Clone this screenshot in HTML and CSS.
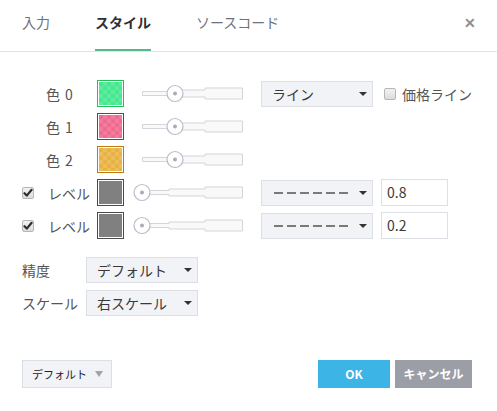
FILE: index.html
```html
<!DOCTYPE html>
<html lang="ja">
<head>
<meta charset="utf-8">
<link rel="stylesheet" href="styles.css">
</head>
<body>
<div class="dialog">
  <div class="header">
    <div class="tab">入力</div>
    <div class="tab active">スタイル</div>
    <div class="tab">ソースコード</div>
    <div class="close">✕</div>
  </div>

  <div class="content">
    <div class="row">
      <div class="cb-cell"></div>
      <div class="label">色<span class="num">0</span></div>
      <div class="swatch green"></div>
      <div class="slider"><svg width="101" height="17" viewBox="0 0 101 17"><path class="track" d="M0.5 6.5H27V5H63V3H100.5V14H63V12H27V10.5H0.5Z"/><circle class="knob" cx="33" cy="8.5" r="8"/><circle class="dot" cx="33" cy="8.5" r="2"/></svg></div>
      <div class="select wide"><span>ライン</span><i class="caret"></i></div>
      <label class="chk-label"><span class="checkbox"></span>価格ライン</label>
    </div>
    <div class="row">
      <div class="cb-cell"></div>
      <div class="label">色<span class="num">1</span></div>
      <div class="swatch pink"></div>
      <div class="slider"><svg width="101" height="17" viewBox="0 0 101 17"><path class="track" d="M0.5 6.5H27V5H63V3H100.5V14H63V12H27V10.5H0.5Z"/><circle class="knob" cx="33" cy="8.5" r="8"/><circle class="dot" cx="33" cy="8.5" r="2"/></svg></div>
    </div>
    <div class="row">
      <div class="cb-cell"></div>
      <div class="label">色<span class="num">2</span></div>
      <div class="swatch orange"></div>
      <div class="slider"><svg width="101" height="17" viewBox="0 0 101 17"><path class="track" d="M0.5 6.5H27V5H63V3H100.5V14H63V12H27V10.5H0.5Z"/><circle class="knob" cx="33" cy="8.5" r="8"/><circle class="dot" cx="33" cy="8.5" r="2"/></svg></div>
    </div>
    <div class="row">
      <div class="cb-cell"><span class="checkbox checked"><svg width="10" height="10" viewBox="0 0 10 10"><path d="M1.5 5.2L3.8 7.6L8.6 1.8" /></svg></span></div>
      <div class="label lv">レベル</div>
      <div class="swatch gray"></div>
      <div class="slider"><svg width="101" height="17" viewBox="0 0 101 17"><path class="track" d="M0.5 6.5H27V5H63V3H100.5V14H63V12H27V10.5H0.5Z"/><circle class="knob" cx="0" cy="8.5" r="8"/><circle class="dot" cx="0" cy="8.5" r="2"/></svg></div>
      <div class="select wide dash"><svg class="dashes" width="74" height="4" viewBox="0 0 74 4"><line x1="0" y1="2" x2="74" y2="2"/></svg><i class="caret"></i></div>
      <div class="input">0.8</div>
    </div>
    <div class="row">
      <div class="cb-cell"><span class="checkbox checked"><svg width="10" height="10" viewBox="0 0 10 10"><path d="M1.5 5.2L3.8 7.6L8.6 1.8" /></svg></span></div>
      <div class="label lv">レベル</div>
      <div class="swatch gray"></div>
      <div class="slider"><svg width="101" height="17" viewBox="0 0 101 17"><path class="track" d="M0.5 6.5H27V5H63V3H100.5V14H63V12H27V10.5H0.5Z"/><circle class="knob" cx="0" cy="8.5" r="8"/><circle class="dot" cx="0" cy="8.5" r="2"/></svg></div>
      <div class="select wide dash"><svg class="dashes" width="74" height="4" viewBox="0 0 74 4"><line x1="0" y1="2" x2="74" y2="2"/></svg><i class="caret"></i></div>
      <div class="input">0.2</div>
    </div>

    <div class="opts">
      <div class="opt-row">
        <div class="opt-label">精度</div>
        <div class="select wide"><span>デフォルト</span><i class="caret"></i></div>
      </div>
      <div class="opt-row">
        <div class="opt-label">スケール</div>
        <div class="select wide"><span>右スケール</span><i class="caret"></i></div>
      </div>
    </div>
  </div>

  <div class="footer">
    <div class="btn-default"><span>デフォルト</span><i class="caret big"></i></div>
    <div class="spacer"></div>
    <div class="btn ok">OK</div>
    <div class="btn cancel">キャンセル</div>
  </div>
</div>
</body>
</html>
```
FILE: styles.css
```css
html, body {
  margin: 0;
  padding: 0;
  background: #fff;
}
body {
  font-family: "Noto Sans CJK JP", "Noto Sans", sans-serif;
  color: #4a4a4a;
  font-size: 14px;
}
.dialog {
  width: 497px;
  height: 411px;
  position: relative;
  box-sizing: border-box;
}
.header {
  height: 51px;
  border-bottom: 1px solid #e0e3e8;
  display: flex;
  align-items: flex-start;
  padding-left: 22px;
  gap: 45px;
  position: relative;
}
.tab {
  height: 51px;
  box-sizing: border-box;
  padding-top: 11px;
  line-height: 22px;
  font-size: 14px;
  color: #6f7277;
  border-bottom: 2px solid transparent;
}
.tab.active {
  color: #2f3033;
  font-weight: bold;
  border-bottom-color: #55b88a;
}
.close {
  position: absolute;
  right: 21px;
  top: 12px;
  font-size: 14px;
  color: #8c9096;
  font-weight: bold;
  line-height: 20px;
}
.content {
  padding-top: 28px;
}
.row {
  display: flex;
  align-items: center;
  height: 27px;
  margin-bottom: 6px;
  padding-left: 22px;
}
.cb-cell {
  width: 24px;
  height: 27px;
  display: flex;
  align-items: center;
}
.label {
  width: 51px;
  font-size: 14px;
  color: #555;
  line-height: 20px;
}
.label .num {
  margin-left: 5px;
}
.label.lv {
  padding-left: 2px;
  width: 49px;
}
.swatch {
  width: 27px;
  height: 27px;
  box-sizing: border-box;
  border: 1px solid;
  padding: 1px;
  background-clip: content-box;
  flex: none;
}
.swatch.green {
  border-color: #1fc252;
  background-color: #44e88f;
  background-image: conic-gradient(rgba(255,255,255,0.14) 25%, transparent 0 50%, rgba(255,255,255,0.14) 0 75%, transparent 0);
  background-size: 8px 8px;
  background-origin: content-box;
}
.swatch.pink {
  border-color: #c2164a;
  background-color: #ef6a8f;
  background-image: conic-gradient(rgba(255,255,255,0.12) 25%, transparent 0 50%, rgba(255,255,255,0.12) 0 75%, transparent 0);
  background-size: 8px 8px;
  background-origin: content-box;
}
.swatch.orange {
  border-color: #bd7b0c;
  background-color: #e9b243;
  background-image: conic-gradient(rgba(255,255,255,0.14) 25%, transparent 0 50%, rgba(255,255,255,0.14) 0 75%, transparent 0);
  background-size: 8px 8px;
  background-origin: content-box;
}
.swatch.gray {
  border-color: #4b4b4b;
  background-color: #808080;
}
.slider {
  width: 101px;
  height: 17px;
  margin-left: 18px;
  flex: none;
}
.slider svg {
  display: block;
  overflow: visible;
}
.track {
  fill: #f9f9fa;
  stroke: #d2d5da;
  stroke-width: 1;
}
.knob {
  fill: #fff;
  stroke: #b9bdc7;
  stroke-width: 1.2;
}
.dot {
  fill: #a8acb7;
}
.select {
  height: 26px;
  box-sizing: border-box;
  background: #f2f3f6;
  border: 1px solid #dcdfe5;
  display: flex;
  align-items: center;
  justify-content: space-between;
  padding: 0 5px 0 10px;
  font-size: 14px;
  color: #3a3a3a;
  flex: none;
}
.select span {
  line-height: 20px;
}
.select.wide {
  width: 112px;
}
.select.dash {
  padding: 0 5px 0 12px;
}
.row .select {
  margin-left: 18px;
}
.caret {
  width: 0;
  height: 0;
  border-left: 4px solid transparent;
  border-right: 4px solid transparent;
  border-top: 4px solid #333;
  flex: none;
}
.caret.big {
  border-left-width: 4px;
  border-right-width: 4px;
  border-top-width: 6px;
  border-top-color: #a0a3a9;
}
.dashes {
  display: block;
  flex: none;
}
.dashes line {
  stroke: #7a7a7a;
  stroke-width: 2;
  stroke-dasharray: 9 4;
}
.chk-label {
  margin-left: 11px;
  display: flex;
  align-items: center;
  gap: 6px;
  font-size: 14px;
  color: #555;
}
.checkbox {
  width: 12px;
  height: 12px;
  box-sizing: border-box;
  border: 1px solid #b4b6ba;
  border-radius: 2px;
  background: linear-gradient(#f2f2f2, #dcdcdc);
  display: flex;
  align-items: center;
  justify-content: center;
  flex: none;
}
.checkbox svg path {
  fill: none;
  stroke: #2e2e2e;
  stroke-width: 2.2;
  stroke-linecap: round;
  stroke-linejoin: round;
}
.input {
  margin-left: 8px;
  width: 67px;
  height: 27px;
  box-sizing: border-box;
  border: 1px solid #dcdfe5;
  background: #fff;
  padding-left: 5px;
  line-height: 25px;
  font-size: 14px;
  color: #3a3a3a;
  flex: none;
}
.opts {
  margin-top: 18px;
  padding-left: 22px;
  display: flex;
  flex-direction: column;
  gap: 7px;
}
.opt-row {
  display: flex;
  align-items: center;
  height: 26px;
}
.opt-label {
  width: 64px;
  font-size: 14px;
  color: #555;
}
.footer {
  position: absolute;
  left: 22px;
  right: 25px;
  top: 360px;
  display: flex;
  align-items: flex-start;
}
.spacer {
  flex: 1;
}
.btn-default {
  width: 90px;
  height: 28px;
  box-sizing: border-box;
  background: #f2f3f6;
  border: 1px solid #dcdfe5;
  display: flex;
  align-items: center;
  justify-content: space-between;
  padding: 0 8px 0 9px;
  font-size: 11px;
  color: #222;
}
.btn {
  height: 28px;
  line-height: 28px;
  text-align: center;
  color: #fff;
  font-size: 12px;
  font-weight: bold;
}
.btn.ok {
  width: 72px;
  background: #3cb4e6;
}
.btn.cancel {
  width: 77px;
  margin-left: 5px;
  background: #9b9ea6;
}
```
